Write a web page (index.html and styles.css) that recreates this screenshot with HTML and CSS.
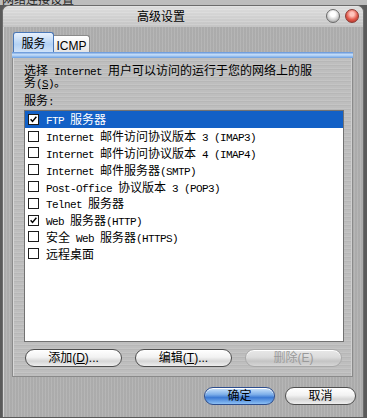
FILE: index.html
```html
<!DOCTYPE html>
<html>
<head>
<meta charset="utf-8">
<link rel="stylesheet" href="styles.css">
</head>
<body>
<div class="top-strip"><span>网络连接设置</span></div>
<div class="window">
  <div class="titlebar">
    <div class="title">高级设置</div>
    <div class="tb-buttons">
      <span class="orb orb-white"></span>
      <span class="orb orb-red"></span>
    </div>
  </div>
  <div class="tabs">
    <div class="tab tab-active">服务</div>
    <div class="tab tab-icmp">ICMP</div>
  </div>
  <div class="panel">
    <div class="panel-strip"></div>
    <div class="panel-body">
      <div class="desc">
        <div class="line">选择<span class="m"> Internet </span>用户可以访问的运行于您的网络上的服</div>
        <div class="line">务<span class="m">(<u>S</u>)</span>。</div>
      </div>
      <div class="label">服务<span class="m">:</span></div>
      <div class="list">
        <div class="row sel"><span class="cb on"><svg viewBox="0 0 11 11"><path d="M2 5.2 L4.3 7.8 L9 2.2" fill="none" stroke="#000" stroke-width="1.8"/></svg></span><span class="txt"><span class="m">FTP </span>服务器</span></div>
        <div class="row"><span class="cb"></span><span class="txt"><span class="m">Internet </span>邮件访问协议版本<span class="m"> 3 (IMAP3)</span></span></div>
        <div class="row"><span class="cb"></span><span class="txt"><span class="m">Internet </span>邮件访问协议版本<span class="m"> 4 (IMAP4)</span></span></div>
        <div class="row"><span class="cb"></span><span class="txt"><span class="m">Internet </span>邮件服务器<span class="m">(SMTP)</span></span></div>
        <div class="row"><span class="cb"></span><span class="txt"><span class="m">Post-Office </span>协议版本<span class="m"> 3 (POP3)</span></span></div>
        <div class="row"><span class="cb"></span><span class="txt"><span class="m">Telnet </span>服务器</span></div>
        <div class="row"><span class="cb on"><svg viewBox="0 0 11 11"><path d="M2 5.2 L4.3 7.8 L9 2.2" fill="none" stroke="#000" stroke-width="1.8"/></svg></span><span class="txt"><span class="m">Web </span>服务器<span class="m">(HTTP)</span></span></div>
        <div class="row"><span class="cb"></span><span class="txt">安全<span class="m"> Web </span>服务器<span class="m">(HTTPS)</span></span></div>
        <div class="row"><span class="cb"></span><span class="txt">远程桌面</span></div>
      </div>
      <div class="btn-row">
        <div class="btn">添加(<u>D</u>)...</div>
        <div class="btn">编辑(<u>T</u>)...</div>
        <div class="btn disabled">删除(E)</div>
      </div>
    </div>
  </div>
  <div class="dlg-buttons">
    <div class="btn btn-small btn-default">确定</div>
    <div class="btn btn-small">取消</div>
  </div>
</div>
</body>
</html>
```
FILE: styles.css
```css
html, body {
  margin: 0;
  padding: 0;
}
body {
  width: 367px;
  height: 418px;
  overflow: hidden;
  background: #5a5a5a;
  font-family: "Noto Sans CJK SC", sans-serif;
  font-size: 12px;
  color: #000;
}
.m {
  font-family: "Liberation Mono", "DejaVu Sans Mono", monospace;
  font-size: 11px;
  letter-spacing: -0.6px;
  line-height: 0;
}
.top-strip {
  height: 5px;
  overflow: hidden;
  background: #bdbdbd;
  padding-left: 2px;
}
.top-strip span {
  display: block;
  margin-top: -7px;
  line-height: 12px;
  color: #222;
}
.window {
  margin: 0 3px 0 2px;
  height: 411px;
  border: 1px solid #6c6c6c;
  border-bottom: none;
  border-radius: 7px 7px 0 0;
  background:
    repeating-linear-gradient(90deg, rgba(255,255,255,0.06) 0 1px, rgba(0,0,0,0.03) 1px 3px),
    #b1b1b1;
  box-shadow: inset 1px 1px 0 #d6d6d6;
  display: flex;
  flex-direction: column;
}
.titlebar {
  height: 21px;
  flex: none;
  position: relative;
  display: flex;
  align-items: center;
  justify-content: center;
  border-radius: 6px 6px 0 0;
  background:
    repeating-linear-gradient(180deg, rgba(255,255,255,0.08) 0 1px, rgba(0,0,0,0.02) 1px 3px),
    linear-gradient(#e2e2e2, #c8c8c8);
}
.title {
  font-size: 12px;
  line-height: 14px;
  margin-left: -44px;
  margin-top: -2px;
}
.tb-buttons {
  position: absolute;
  right: 4px;
  top: 3px;
  display: flex;
  gap: 5px;
}
.orb {
  width: 12px;
  height: 12px;
  border-radius: 50%;
  border: 1px solid #6a6a6a;
}
.orb-white {
  background: radial-gradient(circle at 50% 35%, #ffffff 0 25%, #d4d4d4 55%, #8a8a8a 100%);
}
.orb-red {
  border-color: #8a3a34;
  background: radial-gradient(circle at 50% 35%, #ffc4bc 0 20%, #e25a4c 55%, #a42a20 100%);
}
.tabs {
  flex: none;
  display: flex;
  align-items: flex-end;
  margin-top: 5px;
  padding-left: 10px;
  height: 20px;
}
.tab {
  font-size: 12px;
  line-height: 14px;
  box-sizing: border-box;
  display: flex;
  align-items: center;
  justify-content: center;
}
.tab-active {
  width: 41px;
  height: 20px;
  border: 1px solid #4a78b8;
  border-bottom: none;
  border-radius: 3px 3px 0 0;
  background: linear-gradient(#e8f2fe, #b4d2f4 60%, #cfe2f8);
}
.tab-icmp {
  font-family: "Liberation Sans", sans-serif;
  width: 36px;
  height: 17px;
  border: 1px solid #8a8a8a;
  border-left: none;
  border-bottom: none;
  border-radius: 0 3px 0 0;
  background: linear-gradient(#ffffff, #e4e4e4);
  padding-top: 3px;
}
.panel {
  flex: none;
  margin: 0 10px 0 9px;
  border: 1px solid #8a8a8a;
  border-top: none;
  background:
    repeating-linear-gradient(180deg, rgba(255,255,255,0.10) 0 1px, rgba(0,0,0,0.04) 1px 2px, rgba(255,255,255,0) 2px 4px),
    #bebebe;
  box-shadow: inset 1px 0 0 #d8d8d8, inset -1px 0 0 #d0d0d0;
}
.panel-strip {
  height: 6px;
  margin: 0 -1px;
  background: linear-gradient(#5d8fd6, #c8e0fa 45%, #8ab6ec 80%, #6c9edc);
}
.panel-body {
  padding: 6px 8px 9px 11px;
  display: flex;
  flex-direction: column;
}
.line {
  height: 12px;
  line-height: 12px;
  white-space: nowrap;
}
.label {
  margin-top: 6px;
  height: 12px;
  line-height: 12px;
}
.list {
  margin-top: 4px;
  height: 232px;
  box-sizing: border-box;
  border: 1px solid #727272;
  background: #fff;
}
.row {
  height: 16.8px;
  display: flex;
  align-items: center;
  padding-left: 3px;
  white-space: nowrap;
}
.row.sel {
  background: #1260c6;
  color: #fff;
}
.cb {
  width: 11px;
  height: 11px;
  box-sizing: border-box;
  border: 1px solid #1a1a1a;
  background: #fff;
  flex: none;
  display: flex;
}
.cb svg {
  width: 9px;
  height: 9px;
}
.txt {
  margin-left: 7px;
  line-height: 14px;
}
.btn-row {
  margin-top: 7px;
  margin-left: 1px;
  display: flex;
  gap: 13px;
}
.btn {
  width: 97px;
  height: 18px;
  box-sizing: border-box;
  border: 1px solid #4e4e4e;
  border-radius: 9px;
  background: linear-gradient(#ffffff, #f2f2f2 45%, #d6d6d6 70%, #eeeeee);
  display: flex;
  align-items: center;
  justify-content: center;
  font-family: "Liberation Sans", "Noto Sans CJK SC", sans-serif;
  font-size: 12px;
  line-height: 14px;
  box-shadow: inset 0 1px 0 #fff;
}
.btn.disabled {
  border-color: #a8a8a8;
  color: #9a9a9a;
  background: linear-gradient(#e8e8e8, #dcdcdc 45%, #c4c4c4 70%, #d6d6d6);
}
.dlg-buttons {
  margin-top: 10px;
  margin-right: 7px;
  display: flex;
  justify-content: flex-end;
  gap: 10px;
}
.btn-small {
  width: 71px;
}
.btn-default {
  border-color: #2c4c8c;
  background: linear-gradient(#cfe6fc, #7fb0ea 40%, #3c7ad4 60%, #8cc0f4);
}
```
